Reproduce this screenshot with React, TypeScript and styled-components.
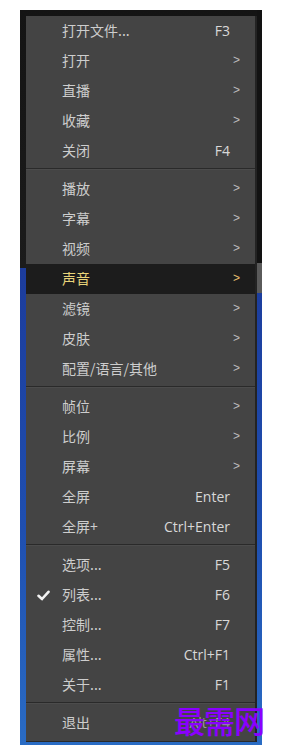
import React from "react";
import styled, { createGlobalStyle } from "styled-components";

const GlobalStyle = createGlobalStyle`
  html, body { margin: 0; padding: 0; background: #ffffff; }
  body { font-family: "Noto Sans CJK SC", "Noto Sans", sans-serif; }
`;

const Page = styled.div`
  position: relative;
  width: 285px;
  height: 750px;
  padding: 10px 0 0 20px;
  box-sizing: border-box;
`;

const Frame = styled.div`
  width: 242px;
  height: 735px;
  box-sizing: border-box;
  padding: 6px 5px 3px 6px;
  background:
    linear-gradient(#5a5a5a, #5a5a5a) right 0 top 253px / 5px 30px no-repeat,
    linear-gradient(#121212, #121212) right 0 top 0 / 5px 253px no-repeat,
    linear-gradient(to bottom, #141414 0, #1b1b1b 258px, #1c3c9c 258px, #1f4fb0 520px, #2a6cc4 735px);
`;

const Menu = styled.div`
  width: 231px;
  height: 726px;
  box-sizing: border-box;
  background: #444444;
  border-right: 2px solid #232323;
  border-bottom: 1px solid #2a2a2a;
  display: flex;
  flex-direction: column;
`;

const Row = styled.div<{ $active?: boolean }>`
  height: 30px;
  flex: none;
  box-sizing: border-box;
  padding-bottom: 2px;
  display: grid;
  grid-template-columns: 36px 1fr auto;
  align-items: center;
  background: ${(p) => (p.$active ? "#1c1c1c" : "transparent")};
  color: ${(p) => (p.$active ? "#e8d47a" : "#cdcdcd")};
`;

const Gutter = styled.div`
  display: flex;
  align-items: center;
  padding-left: 11px;
  padding-top: 2px;
`;

const Label = styled.span`
  font-size: 14px;
  line-height: 28px;
  white-space: nowrap;
`;

const Shortcut = styled.span<{ $dim?: boolean }>`
  font-family: "Open Sans", "Noto Sans", sans-serif;
  font-size: 14px;
  font-weight: 500;
  margin-right: 25px;
  color: ${(p) => (p.$dim ? "#9a9a9a" : "#d8d8d8")};
  white-space: nowrap;
`;

const Arrow = styled.span<{ $active?: boolean }>`
  font-family: "Liberation Sans", sans-serif;
  font-size: 12px;
  margin-right: 15px;
  color: ${(p) => (p.$active ? "#e8c070" : "#bdbdbd")};
`;

const Separator = styled.div`
  height: 8px;
  flex: none;
  box-sizing: border-box;
  padding-top: 2px;
  &::before {
    content: "";
    display: block;
    height: 1px;
    background: #2a2a2a;
    border-bottom: 1px solid #4c4c4c;
  }
`;

const Watermark = styled.div`
  position: absolute;
  left: 174px;
  top: 700px;
  font-family: "Noto Sans CJK SC", sans-serif;
  font-weight: 500;
  font-size: 31px;
  line-height: 40px;
  color: #8a00ff;
  letter-spacing: -1px;
`;

type Item = {
  label?: string;
  shortcut?: string;
  sub?: boolean;
  active?: boolean;
  checked?: boolean;
  dim?: boolean;
  sep?: boolean;
};

const items: Item[] = [
  { label: "打开文件...", shortcut: "F3" },
  { label: "打开", sub: true },
  { label: "直播", sub: true },
  { label: "收藏", sub: true },
  { label: "关闭", shortcut: "F4" },
  { sep: true },
  { label: "播放", sub: true },
  { label: "字幕", sub: true },
  { label: "视频", sub: true },
  { label: "声音", sub: true, active: true },
  { label: "滤镜", sub: true },
  { label: "皮肤", sub: true },
  { label: "配置/语言/其他", sub: true },
  { sep: true },
  { label: "帧位", sub: true },
  { label: "比例", sub: true },
  { label: "屏幕", sub: true },
  { label: "全屏", shortcut: "Enter" },
  { label: "全屏+", shortcut: "Ctrl+Enter" },
  { sep: true },
  { label: "选项...", shortcut: "F5" },
  { label: "列表...", shortcut: "F6", checked: true },
  { label: "控制...", shortcut: "F7" },
  { label: "属性...", shortcut: "Ctrl+F1" },
  { label: "关于...", shortcut: "F1" },
  { sep: true },
  { label: "退出", shortcut: "Alt+F4", dim: true },
];

const Check = () => (
  <svg width="13" height="11" viewBox="0 0 13 11">
    <path d="M1.5 5.8 L5 9 L11.5 1.8" fill="none" stroke="#f2f2f2" strokeWidth="2.6" strokeLinecap="round" strokeLinejoin="round" />
  </svg>
);

export default function App() {
  return (
    <Page>
      <GlobalStyle />
      <Frame>
        <Menu>
          {items.map((it, i) =>
            it.sep ? (
              <Separator key={i} />
            ) : (
              <Row key={i} $active={it.active}>
                <Gutter>{it.checked ? <Check /> : null}</Gutter>
                <Label>{it.label}</Label>
                {it.sub ? (
                  <Arrow $active={it.active}>&gt;</Arrow>
                ) : (
                  <Shortcut $dim={it.dim}>{it.shortcut}</Shortcut>
                )}
              </Row>
            )
          )}
        </Menu>
      </Frame>
      <Watermark>最需网</Watermark>
    </Page>
  );
}
